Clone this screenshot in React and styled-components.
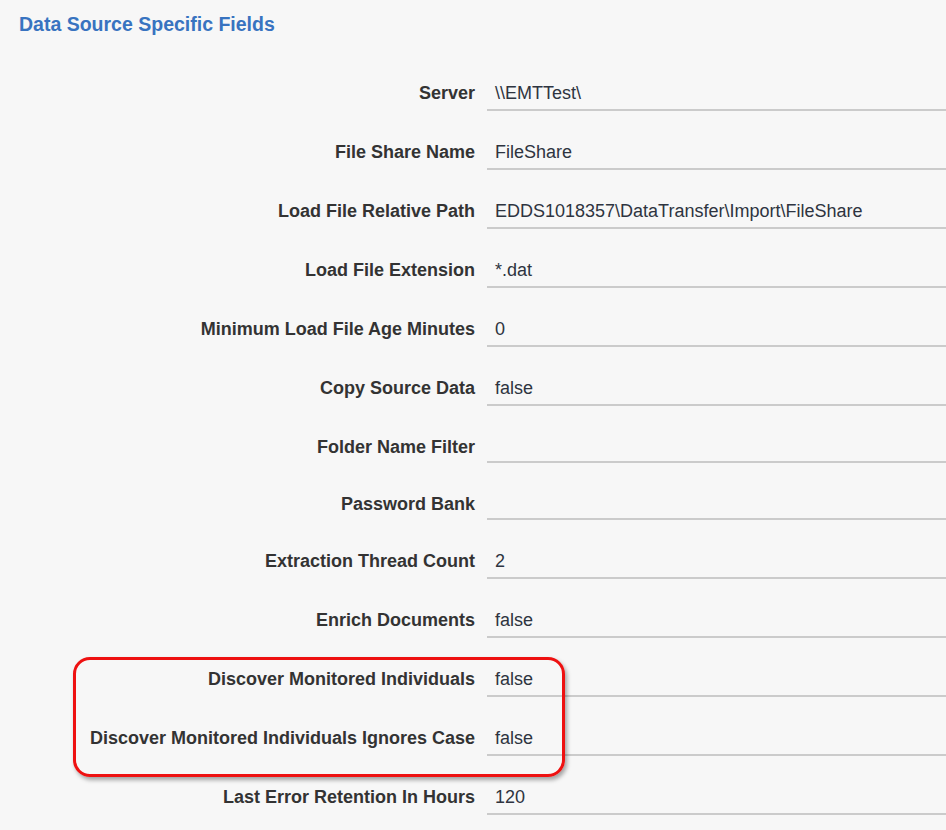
import React from "react";
import styled, { createGlobalStyle } from "styled-components";

const GlobalStyle = createGlobalStyle`
  html, body {
    margin: 0;
    padding: 0;
    background: #f7f7f7;
  }
  body {
    font-family: "Liberation Sans", Arial, Helvetica, sans-serif;
    color: #333;
  }
`;

const Page = styled.div`
  width: 946px;
  min-height: 830px;
  background: #f7f7f7;
  overflow: hidden;
`;

const Title = styled.h2`
  margin: 0 0 16px;
  padding: 12px 19px 0;
  font-size: 19.5px;
  line-height: 24px;
  font-weight: 700;
  color: #3873c0;
`;

const Fields = styled.div`
  display: flex;
  flex-direction: column;
`;

const Row = styled.div`
  display: grid;
  grid-template-columns: 475px 1fr;
  column-gap: 12px;
  align-items: start;
  padding-top: 23px;
`;

const Label = styled.div`
  padding-top: 6px;
  font-size: 18px;
  line-height: 24px;
  font-weight: 700;
  text-align: right;
  color: #333;
  white-space: nowrap;
`;

const Value = styled.div`
  padding: 6px 8px 4px;
  min-height: 22px;
  font-size: 18px;
  line-height: 24px;
  color: #2e3440;
  border-bottom: 2px solid #cbcbcb;
  white-space: nowrap;
`;

const Highlight = styled.div`
  position: relative;

  &::after {
    content: "";
    position: absolute;
    left: 73px;
    top: 19px;
    bottom: -21px;
    width: 492px;
    box-sizing: border-box;
    border: 3px solid #ee1111;
    border-radius: 17px;
    box-shadow: 2px 3px 4px rgba(0, 0, 0, 0.35);
    pointer-events: none;
  }
`;

const Field = ({ label, value }) => (
  <Row>
    <Label>{label}</Label>
    <Value>{value}</Value>
  </Row>
);

const before = [
  ["Server", "\\\\EMTTest\\"],
  ["File Share Name", "FileShare"],
  ["Load File Relative Path", "EDDS1018357\\DataTransfer\\Import\\FileShare"],
  ["Load File Extension", "*.dat"],
  ["Minimum Load File Age Minutes", "0"],
  ["Copy Source Data", "false"],
  ["Folder Name Filter", ""],
  ["Password Bank", ""],
  ["Extraction Thread Count", "2"],
  ["Enrich Documents", "false"],
];

const highlighted = [
  ["Discover Monitored Individuals", "false"],
  ["Discover Monitored Individuals Ignores Case", "false"],
];

const after = [["Last Error Retention In Hours", "120"]];

export default function App() {
  return (
    <>
      <GlobalStyle />
      <Page>
        <Title>Data Source Specific Fields</Title>
        <Fields>
          {before.map(([l, v]) => (
            <Field key={l} label={l} value={v} />
          ))}
          <Highlight>
            {highlighted.map(([l, v]) => (
              <Field key={l} label={l} value={v} />
            ))}
          </Highlight>
          {after.map(([l, v]) => (
            <Field key={l} label={l} value={v} />
          ))}
        </Fields>
      </Page>
    </>
  );
}
